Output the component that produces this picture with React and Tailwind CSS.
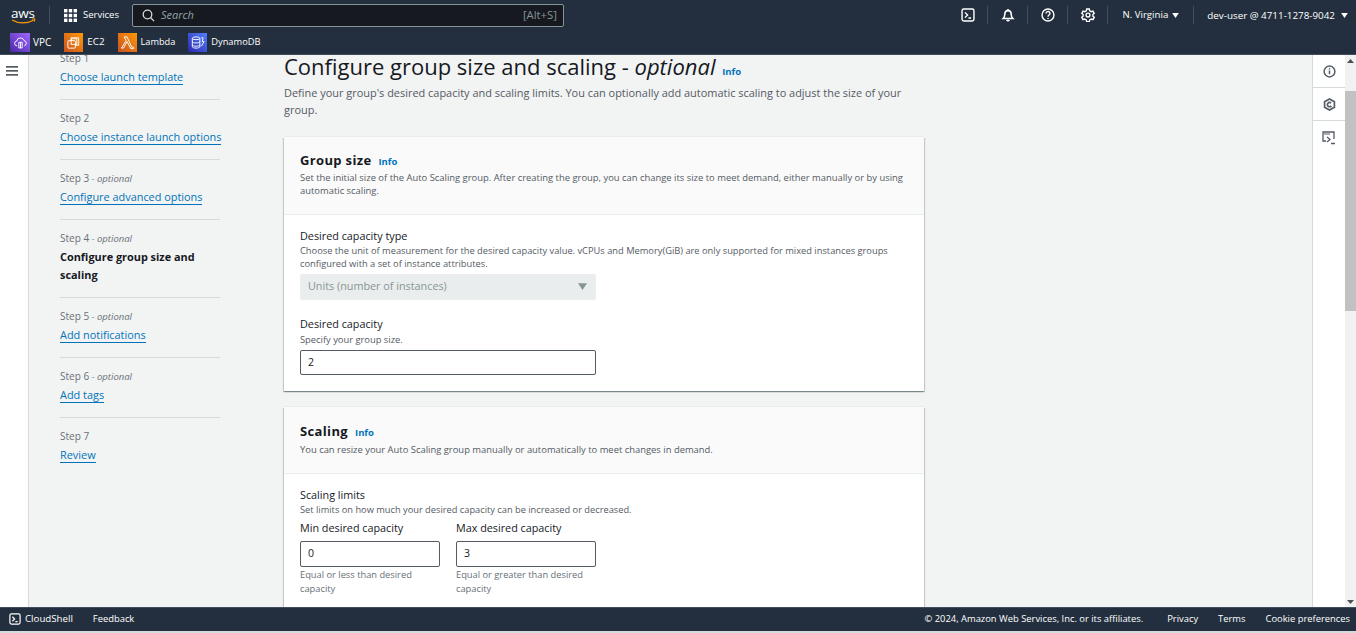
import React from "react";

function Grid() {
  return (
    <svg width="13" height="13" viewBox="0 0 13 13" fill="#fff">
      {[0, 4.8, 9.6].flatMap((y) => [0, 4.8, 9.6].map((x) => <rect key={x + "-" + y} x={x} y={y} width="3.4" height="3.4" />))}
    </svg>
  );
}
function Term({ size = 16 }) {
  return (
    <svg width={size} height={size} viewBox="0 0 16 16" fill="none" stroke="#fff" strokeWidth="1.6">
      <rect x="1.2" y="1.2" width="13.6" height="13.6" rx="2" />
      <path d="M4.5 5l3 3-3 3M8.5 11.5h3" />
    </svg>
  );
}
function Caret({ color = "#fff", w = 8, h = 6 }) {
  return (
    <svg width={w} height={h} viewBox="0 0 8 6" fill={color}><path d="M0 0h8L4 6z" /></svg>
  );
}
function IconCell({ children }) {
  return (
    <div className="flex h-[18px] w-[40px] items-center justify-center border-r border-[#414d5c]">{children}</div>
  );
}
function Svc({ bg, label, labelClass = "", children }) {
  return (
    <div className="flex items-center gap-[4px]">
      <div className={"flex h-[19px] w-[19px] items-center justify-center " + bg}>{children}</div>
      <span className={"font-medium text-white " + labelClass}>{label}</span>
    </div>
  );
}
function Step({ label, opt, link, current, last }) {
  return (
    <div className={"w-[160px] pb-[13px] mb-[11px] " + (last ? "" : "border-b border-[#d5dbdb]")}>
      <div className="h-[14px] text-[10px] leading-[14px] text-[#687078]">
        {label}
        {opt && <span className="text-[9.5px] italic leading-none"> - optional</span>}
      </div>
      {current ? (
        <div className="mt-[3px] text-[10.9px] font-bold leading-[18px] text-[#16191f]">{link}</div>
      ) : (
        <div className="mt-[3px] text-[10.9px] leading-[18px] whitespace-nowrap">
          <span className="border-b border-[#0073bb] text-[#0073bb]">{link}</span>
        </div>
      )}
    </div>
  );
}
function Card({ title, desc, children, mb, descClass = "", headClass = "" }) {
  return (
    <section className={"w-[640px] bg-white shadow-[0_1px_1px_0_rgba(0,28,36,0.3),1px_1px_1px_0_rgba(0,28,36,0.15),-1px_1px_1px_0_rgba(0,28,36,0.15),0_-1px_0_0_#eaeded] " + mb}>
      <header className={"border-b border-[#eaeded] bg-[#fafafa] px-[16px] pb-[17px] " + headClass}>
        <div className="flex items-baseline gap-[7px]">
          <h2 className="text-[13px] font-bold leading-[20px] tracking-[0.35px] text-[#16191f]">{title}</h2>
          <span className="text-[9.5px] font-bold leading-none text-[#0073bb]">Info</span>
        </div>
        <p className={"text-[9.42px] leading-[13px] text-[#545b64] " + descClass}>{desc}</p>
      </header>
      {children}
    </section>
  );
}
function Field({ value, w = "w-[296px]", h = "h-[25px]" }) {
  return (
    <div className={"flex items-center rounded-[2px] border border-[#545b64] bg-white pl-[7px] text-[10.5px] text-[#16191f] " + h + " " + w}>{value}</div>
  );
}

export default function App() {
  return (
    <div className="flex h-[633px] w-[1356px] flex-col overflow-hidden bg-[#f2f3f3] font-['Open_Sans','Noto_Sans',sans-serif]">
      <header className="h-[55px] shrink-0 border-b border-[#414d5c] bg-[#232f3e]">
        <div className="flex h-[30px] items-center text-white">
          <div className="flex w-[49px] items-center pl-[11px]">
            <svg width="26" height="19" viewBox="0 0 26 19" className="overflow-visible">
              <text x="0" y="11.500" fontSize="13.500" fill="#fff" fontFamily="'Open Sans',sans-serif" letterSpacing="-0.2">aws</text>
              <path d="M1 14c6.500 3.800 15 3.800 21.500.2" stroke="#f90" strokeWidth="1.300" fill="none" />
              <path d="M20.800 13.300l3.200-.5-.8 3" stroke="#f90" strokeWidth="1" fill="none" />
            </svg>
          </div>
          <div className="h-[18px] w-px bg-[#414d5c]" />
          <div className="ml-[14px] flex items-center gap-[6px]">
            <Grid />
            <span className="text-[9.5px] font-medium">Services</span>
          </div>
          <div className="ml-[13px] flex h-[23px] w-[432px] items-center rounded-[2px] border border-[#879596] bg-[#16191f] pl-[9px] pr-[6px]">
            <svg width="13" height="13" viewBox="0 0 13 13" fill="none" stroke="#d5dbdb" strokeWidth="1.300"><circle cx="5.500" cy="5.500" r="4.300" /><path d="M8.700 8.700l3.400 3.400" /></svg>
            <span className="ml-[6px] text-[11px] italic text-[#95a5a6]">Search</span>
            <span className="ml-auto text-[11.3px] text-[#879596]">[Alt+S]</span>
          </div>
          <div className="ml-auto flex items-center">
            <IconCell><Term size={14} /></IconCell>
            <IconCell>
              <svg width="14" height="14" viewBox="0 0 16 16" fill="none" stroke="#fff" strokeWidth="1.800"><path d="M2.500 12h11c-1.300-1.200-1.800-2.400-1.800-4.500C11.700 5 10.300 3 8 3S4.300 5 4.300 7.500C4.300 9.600 3.800 10.800 2.500 12z" /><path d="M6.500 13.500a1.700 1.700 0 0 0 3 0M8 1v2" /></svg>
            </IconCell>
            <IconCell>
              <svg width="14" height="14" viewBox="0 0 16 16" fill="none" stroke="#fff" strokeWidth="1.600"><circle cx="8" cy="8" r="6.800" /><path d="M5.800 6.200a2.200 2.200 0 1 1 3.400 1.800C8.400 8.500 8 9 8 10M8 11.300v1.200" /></svg>
            </IconCell>
            <IconCell>
              <svg width="14" height="14" viewBox="0 0 16 16" fill="none" stroke="#fff" strokeWidth="1.600"><path d="M6.500 1h3l.4 2 1.800 1 1.900-.7 1.500 2.600-1.500 1.300v2l1.500 1.300-1.500 2.600-1.900-.7-1.800 1-.4 2h-3l-.4-2-1.800-1-1.900.7L.9 10.500l1.500-1.300v-2L.9 5.900l1.500-2.600 1.900.7 1.800-1z" transform="translate(0 .2)" /><circle cx="8" cy="8" r="2.200" /></svg>
            </IconCell>
            <span className="ml-[14px] text-[9.66px] font-medium">N. Virginia</span>
            <span className="ml-[4px]"><Caret w={7} h={5} /></span>
            <div className="ml-[14px] h-[18px] w-px bg-[#414d5c]" />
            <span className="ml-[13px] text-[9.85px] font-medium">dev-user @ 4711-1278-9042</span>
            <span className="ml-[6px] mr-[8px]"><Caret w={7} h={5} /></span>
          </div>
        </div>
        <div className="flex h-[24px] items-center gap-[13px] pl-[10px]">
          <Svc bg="w-[20px] -mr-[1px] bg-gradient-to-tr from-[#4d27a8] to-[#a166ff]" labelClass="text-[10px]" label="VPC">
            <svg width="15" height="15" viewBox="0 0 16 16" fill="none" stroke="#fff" strokeWidth="1"><path d="M4.500 11.500a2.500 2.500 0 0 1-.5-5 4 4 0 0 1 7.800-.5 2.800 2.800 0 0 1 .2 5.500" /><path d="M6.200 7.800h3.600v6H6.200zM8 7.800v6" /></svg>
          </Svc>
          <Svc bg="bg-gradient-to-tr from-[#c8511b] to-[#ff9900]" labelClass="text-[9.8px]" label="EC2">
            <svg width="15" height="15" viewBox="0 0 16 16" fill="none" stroke="#fff" strokeWidth="1"><rect x="2" y="6" width="8" height="8" rx="1" /><path d="M5.500 6V3h8v8h-3.500" /><rect x="5.500" y="4" width="6" height="6" /></svg>
          </Svc>
          <Svc bg="bg-gradient-to-tr from-[#c8511b] to-[#ff9900]" labelClass="text-[9.2px]" label="Lambda">
            <svg width="15" height="15" viewBox="0 0 16 16" fill="none" stroke="#fff" strokeWidth="1"><path d="M1.500 14L6.500 6 4.500 2h3l5 11h2v1.500h-3L7.500 7l-3.800 7z" /></svg>
          </Svc>
          <Svc bg="bg-gradient-to-tr from-[#2e27ad] to-[#527fff]" labelClass="text-[9.3px]" label="DynamoDB">
            <svg width="15" height="15" viewBox="0 0 16 16" fill="none" stroke="#fff" strokeWidth="1"><ellipse cx="6.500" cy="3.500" rx="4" ry="1.500" /><path d="M2.500 3.500v9c0 .8 1.800 1.500 4 1.500s4-.7 4-1.500V3.500M2.500 7c0 .8 1.800 1.500 4 1.500S10.500 7.800 10.500 7M2.500 10.500c0 .8 1.800 1.500 4 1.500s4-.7 4-1.500M12 3l2 0-1 4h2l-3 5" /></svg>
          </Svc>
        </div>
      </header>

      <div className="flex min-h-0 flex-1 overflow-hidden">
        <div className="flex w-[29px] shrink-0 justify-center border-r border-[#d5dbdb] bg-white pr-[5px] pt-[11px]">
          <svg width="12" height="10" viewBox="0 0 12 10" fill="#545b64"><rect width="12" height="1.700" y="0" /><rect width="12" height="1.700" y="4" /><rect width="12" height="1.700" y="8" /></svg>
        </div>

        <nav className="w-[255px] shrink-0 pl-[31px] -mt-[4px]">
          <Step label="Step 1" link="Choose launch template" />
          <Step label="Step 2" link="Choose instance launch options" />
          <Step label="Step 3" opt link="Configure advanced options" />
          <Step label="Step 4" opt current link="Configure group size and scaling" />
          <Step label="Step 5" opt link="Add notifications" />
          <Step label="Step 6" opt link="Add tags" />
          <Step label="Step 7" link="Review" last />
        </nav>

        <main className="min-w-0 flex-1">
          <div className="w-[640px]">
            <h1 className="-mt-[1px] text-[22px] leading-[24px] text-[#16191f]">
              Configure group size and scaling - <i>optional</i> <span className="ml-[1px] text-[9.5px] font-bold not-italic leading-none text-[#0073bb]">Info</span>
            </h1>
            <p className="mt-[6px] text-[10.95px] leading-[17px] text-[#545b64]">
              Define your group's desired capacity and scaling limits. You can optionally add automatic scaling to adjust the size of your group.
            </p>
          </div>
          <div className="mt-[19px]">
            <Card mb="mb-[16px]" headClass="pt-[13px]" descClass="mt-[1px]" title="Group size" desc="Set the initial size of the Auto Scaling group. After creating the group, you can change its size to meet demand, either manually or by using automatic scaling.">
              <div className="px-[16px] pb-[16px] pt-[14px]">
                <div className="text-[10.8px] leading-[14px] text-[#16191f]">Desired capacity type</div>
                <p className="mt-[1px] text-[9.3px] leading-[13px] text-[#545b64]">Choose the unit of measurement for the desired capacity value. vCPUs and Memory(GiB) are only supported for mixed instances groups configured with a set of instance attributes.</p>
                <div className="mt-[4px] flex h-[26px] w-[296px] items-center justify-between rounded-[2px] bg-[#eaeded] pb-[1px] pl-[8px] pr-[9px] text-[10.8px] text-[#879596]">
                  Units (number of instances)
                  <Caret color="#879596" w={9} h={7} />
                </div>
                <div className="mt-[17px] text-[10.8px] leading-[14px] text-[#16191f]">Desired capacity</div>
                <div className="mt-[2px] text-[9.35px] leading-[13px] text-[#545b64]">Specify your group size.</div>
                <div className="mt-[4px]"><Field value="2" /></div>
              </div>
            </Card>
            <Card mb="" title="Scaling" headClass="pt-[14px]" descClass="mt-[2px]" desc="You can resize your Auto Scaling group manually or automatically to meet changes in demand.">
              <div className="px-[16px] pb-[16px] pt-[14px]">
                <div className="text-[10.8px] leading-[14px] text-[#16191f]">Scaling limits</div>
                <div className="mt-[1px] text-[9.28px] leading-[13px] text-[#545b64]">Set limits on how much your desired capacity can be increased or decreased.</div>
                <div className="mt-[5px] flex gap-[16px]">
                  {[["Min desired capacity", "0", "Equal or less than desired capacity"], ["Max desired capacity", "3", "Equal or greater than desired capacity"]].map(([l, v, h]) => (
                    <div key={l} className="w-[140px]">
                      <div className="text-[10.8px] leading-[14px] text-[#16191f]">{l}</div>
                      <div className="mt-[6px]"><Field value={v} w="w-[140px]" h="h-[26px]" /></div>
                      <p className="mt-[1px] text-[9.3px] leading-[14px] text-[#687078]">{h}</p>
                    </div>
                  ))}
                </div>
              </div>
            </Card>
          </div>
        </main>

        <aside className="w-[33px] shrink-0 border-l border-[#d5dbdb] bg-white">
          <div className="flex h-[33px] items-center justify-center border-b border-[#d5dbdb]">
            <svg width="13" height="13" viewBox="0 0 14 14" fill="none" stroke="#545b64" strokeWidth="1.600"><circle cx="7" cy="7" r="5.800" /><path d="M7 6v4M7 3.500v1.300" /></svg>
          </div>
          <div className="flex h-[33px] items-center justify-center border-b border-[#d5dbdb]">
            <svg width="13" height="13" viewBox="0 0 14 14" fill="none" stroke="#545b64" strokeWidth="1.800"><path d="M7 1l5.300 3v6L7 13l-5.300-3V4z" /><path d="M8.700 5.500A2.300 2.300 0 1 0 9 8.300" /></svg>
          </div>
          <div className="flex h-[33px] items-center justify-center">
            <svg width="14" height="14" viewBox="0 0 14 14" fill="none" stroke="#545b64" strokeWidth="1.300"><path d="M4 10H1V1h11v7" /><path d="M5 6l3 2.500-3 2.500M9 12.500h4" /><path d="M2.500 3h6" strokeWidth="2" strokeDasharray="1 1" /></svg>
          </div>
        </aside>

        <div className="flex w-[11px] shrink-0 flex-col bg-[#f1f1f1]">
          <div className="flex h-[11px] items-center justify-center"><svg width="7" height="4" viewBox="0 0 7 4" fill="#505050"><path d="M3.500 0L7 4H0z" /></svg></div>
          <div className="mt-[25px] h-[220px] bg-[#c1c1c1]" />
          <div className="mt-auto flex h-[11px] items-center justify-center"><svg width="7" height="4" viewBox="0 0 7 4" fill="#505050"><path d="M0 0h7L3.500 4z" /></svg></div>
        </div>
      </div>

      <footer className="flex h-[26px] shrink-0 items-center border-t border-[#414d5c] border-b-2 border-b-[#d5dbdb] bg-[#232f3e] pb-[1px] text-[9.4px] font-medium text-white">
        <div className="ml-[9px] flex items-center gap-[4px]"><Term size={12} /><span className="text-[9.7px]">CloudShell</span></div>
        <span className="ml-[20px]">Feedback</span>
        <span className="ml-auto">© 2024, Amazon Web Services, Inc. or its affiliates.</span>
        <span className="ml-[24px]">Privacy</span>
        <span className="ml-[20px]">Terms</span>
        <span className="ml-[20px] mr-[6px]">Cookie preferences</span>
      </footer>
    </div>
  );
}
